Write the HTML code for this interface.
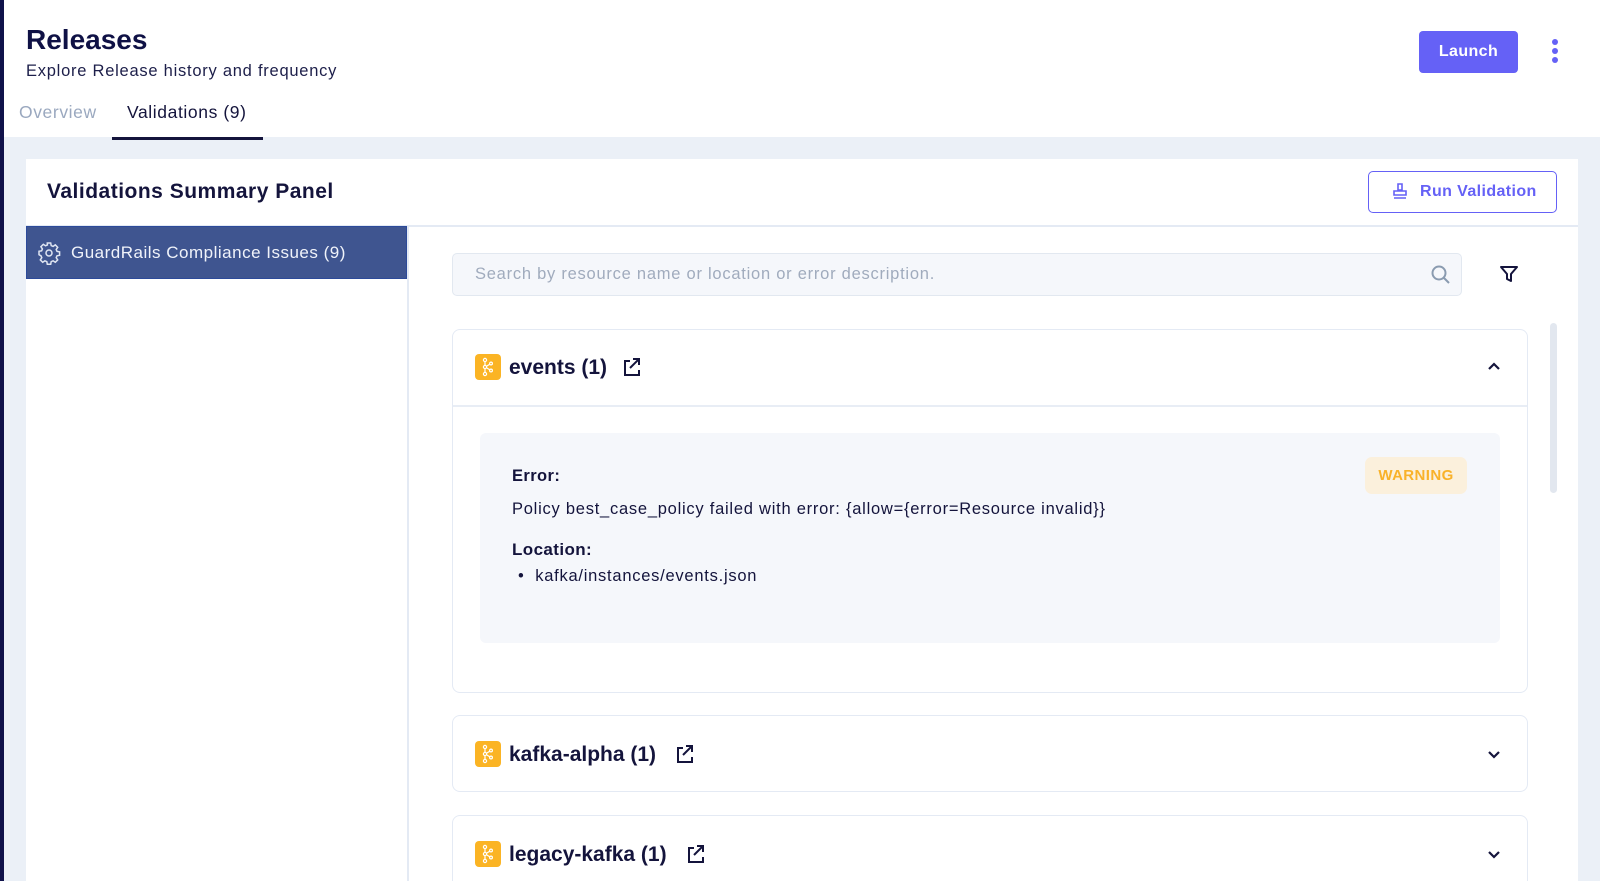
<!DOCTYPE html>
<html><head><meta charset="utf-8"><style>
*{box-sizing:border-box;margin:0;padding:0}
html,body{overflow:hidden;height:881px}
body{width:1600px;background:#ebf0f7;font-family:"Liberation Sans",sans-serif;color:#14143c;position:relative}
.abs{position:absolute}
.strip{left:0;top:0;width:4px;height:881px;background:#10124a}
.hdr{left:4px;top:0;width:1596px;height:137px;background:#fff}
.panel{left:26px;top:159px;width:1552px;height:722px;background:#fff}
.card{background:#fff;border:1.5px solid #e4eaf4;border-radius:8px;left:452px;width:1076px}
.kic{width:26px;height:26px;background:#fbb424;border-radius:4px}
.ct{font-size:21px;font-weight:bold;color:#14143c}
.rg{font-size:16.5px;letter-spacing:0.75px}
</style></head><body>
<div class="abs strip"></div>
<div class="abs hdr"></div>
<div class="abs" style="left:26px;top:24px;font-size:28px;font-weight:bold;color:#0f1145">Releases</div>
<div class="abs rg" style="left:26px;top:62px;color:#1d1f4a">Explore Release history and frequency</div>
<div class="abs" style="left:19px;top:102px;font-size:17.5px;letter-spacing:0.6px;color:#9aa8bf">Overview</div>
<div class="abs" style="left:127px;top:102px;font-size:17.5px;letter-spacing:0.6px;color:#14143c">Validations (9)</div>
<div class="abs" style="left:112px;top:137px;width:151px;height:3px;background:#14143c"></div>
<div class="abs" style="left:1419px;top:31px;width:99px;height:42px;background:#6561f6;border-radius:4px;color:#fff;font-weight:bold;font-size:16px;letter-spacing:0.4px;text-align:center;line-height:42px">Launch</div>
<div class="abs" style="left:1552px;top:39px;width:6px;height:6px;border-radius:3px;background:#6561f6;box-shadow:0 9px 0 #6561f6,0 18px 0 #6561f6"></div>
<div class="abs panel"></div>
<div class="abs" style="left:47px;top:180px;font-size:21px;font-weight:bold;letter-spacing:0.5px;color:#14143c">Validations Summary Panel</div>
<div class="abs" style="left:1368px;top:171px;width:189px;height:42px;border:1.5px solid #6561f6;border-radius:5px;color:#6561f6;font-weight:bold;font-size:16px;letter-spacing:0.4px;line-height:39px;padding-left:51px">Run Validation</div>
<svg class="abs" style="left:1391px;top:182px" width="18" height="18" viewBox="0 0 18 18" fill="none" stroke="#6561f6" stroke-width="1.6"><path d="M7 2h4v6H7z M3 9h12v4H3z M3 16h12"/></svg>
<div class="abs" style="left:26px;top:225px;width:1552px;height:1.5px;background:#e4eaf4"></div>
<div class="abs" style="left:407px;top:226px;width:1.5px;height:655px;background:#e4eaf4"></div>
<div class="abs" style="left:26px;top:226px;width:381px;height:53px;background:#3f5590;border:1px solid #2c4a9a"></div>
<svg class="abs" style="left:37px;top:241px" width="24" height="24" viewBox="0 0 24 24" fill="none" stroke="#dfe5f2" stroke-width="1.5"><circle cx="12" cy="12" r="3"/><path d="M10.3 2h3.4l.5 2.6 1.9.8 2.2-1.5 2.4 2.4-1.5 2.2.8 1.9 2.6.5v3.4l-2.6.5-.8 1.9 1.5 2.2-2.4 2.4-2.2-1.5-1.9.8-.5 2.6h-3.4l-.5-2.6-1.9-.8-2.2 1.5-2.4-2.4 1.5-2.2-.8-1.9L2 13.7v-3.4l2.6-.5.8-1.9-1.5-2.2 2.4-2.4 2.2 1.5 1.9-.8z"/></svg>
<div class="abs" style="left:71px;top:243px;font-size:17px;letter-spacing:0.5px;color:#f0f3fa">GuardRails Compliance Issues (9)</div>
<div class="abs rg" style="left:452px;top:253px;width:1010px;height:43px;background:#f5f7fb;border:1px solid #e2e8f0;border-radius:5px;color:#a0abbd;line-height:41px;padding-left:22px">Search by resource name or location or error description.</div>
<svg class="abs" style="left:1430px;top:264px" width="22" height="22" viewBox="0 0 22 22" fill="none" stroke="#8a9bb0" stroke-width="2"><circle cx="9" cy="9" r="6.5"/><path d="M14 14l5 5"/></svg>
<svg class="abs" style="left:1499px;top:264px" width="20" height="20" viewBox="0 0 20 20" fill="none" stroke="#14143c" stroke-width="2" stroke-linejoin="round"><path d="M2 3h16l-6 7v7l-4-2v-5z"/></svg>
<div class="abs" style="left:1550px;top:323px;width:7px;height:170px;background:#e2e7ef;border-radius:4px"></div>
<div class="abs card" style="top:329px;height:364px"></div>
<div class="abs" style="left:453px;top:405px;width:1074px;height:1.5px;background:#e8edf5"></div>
<div class="abs card" style="top:715px;height:77px"></div>
<div class="abs card" style="top:815px;height:80px"></div>
<div class="abs" style="left:480px;top:433px;width:1020px;height:210px;background:#f5f7fb;border-radius:6px"></div>
<div class="abs" style="left:512px;top:467px;font-size:16.5px;font-weight:bold;letter-spacing:0.4px">Error:</div>
<div class="abs rg" style="left:512px;top:500px">Policy best_case_policy failed with error: {allow={error=Resource invalid}}</div>
<div class="abs" style="left:512px;top:540px;font-size:17px;font-weight:bold;letter-spacing:0.4px">Location:</div>
<div class="abs rg" style="left:518px;top:567px">• &nbsp;kafka/instances/events.json</div>
<div class="abs" style="left:1365px;top:457px;width:102px;height:37px;background:#fbf0dc;border-radius:7px;color:#f9b22a;font-weight:bold;font-size:15px;letter-spacing:0.4px;text-align:center;line-height:37px">WARNING</div>
<div class="abs kic" style="left:475px;top:354px"></div>
<div class="abs ct" style="left:509px;top:356px">events (1)</div>
<div class="abs kic" style="left:475px;top:741px"></div>
<div class="abs ct" style="left:509px;top:743px">kafka-alpha (1)</div>
<div class="abs kic" style="left:475px;top:841px"></div>
<div class="abs ct" style="left:509px;top:843px">legacy-kafka (1)</div>
<svg width="0" height="0" style="position:absolute"><defs>
<g id="k"><g fill="none" stroke="#fff" stroke-width="1.2"><circle cx="10" cy="6" r="1.6"/><circle cx="10" cy="13" r="1.6"/><circle cx="10" cy="20" r="1.6"/><circle cx="16" cy="9.5" r="1.4"/><circle cx="16" cy="16.5" r="1.4"/><path d="M10 7.6v3.8M10 14.6v3.8M11.5 12.3l3.2-2M11.5 13.7l3.2 2"/></g></g>
<g id="ext"><g fill="none" stroke="#14143c" stroke-width="2"><path d="M9 4H4v14h14v-5M12 2h6v6M18 2l-9 9"/></g></g>
</defs></svg>
<svg class="abs" style="left:475px;top:354px" width="26" height="26"><use href="#k"/></svg>
<svg class="abs" style="left:475px;top:741px" width="26" height="26"><use href="#k"/></svg>
<svg class="abs" style="left:475px;top:841px" width="26" height="26"><use href="#k"/></svg>
<svg class="abs" style="left:621px;top:357px" width="21" height="21"><use href="#ext"/></svg>
<svg class="abs" style="left:674px;top:744px" width="21" height="21"><use href="#ext"/></svg>
<svg class="abs" style="left:685px;top:844px" width="21" height="21"><use href="#ext"/></svg>
<svg class="abs" style="left:1487px;top:361px" width="14" height="10" fill="none" stroke="#14143c" stroke-width="2.2"><path d="M2 8l5-5 5 5"/></svg>
<svg class="abs" style="left:1487px;top:750px" width="14" height="10" fill="none" stroke="#14143c" stroke-width="2.2"><path d="M2 2l5 5 5-5"/></svg>
<svg class="abs" style="left:1487px;top:850px" width="14" height="10" fill="none" stroke="#14143c" stroke-width="2.2"><path d="M2 2l5 5 5-5"/></svg>
</body></html>
